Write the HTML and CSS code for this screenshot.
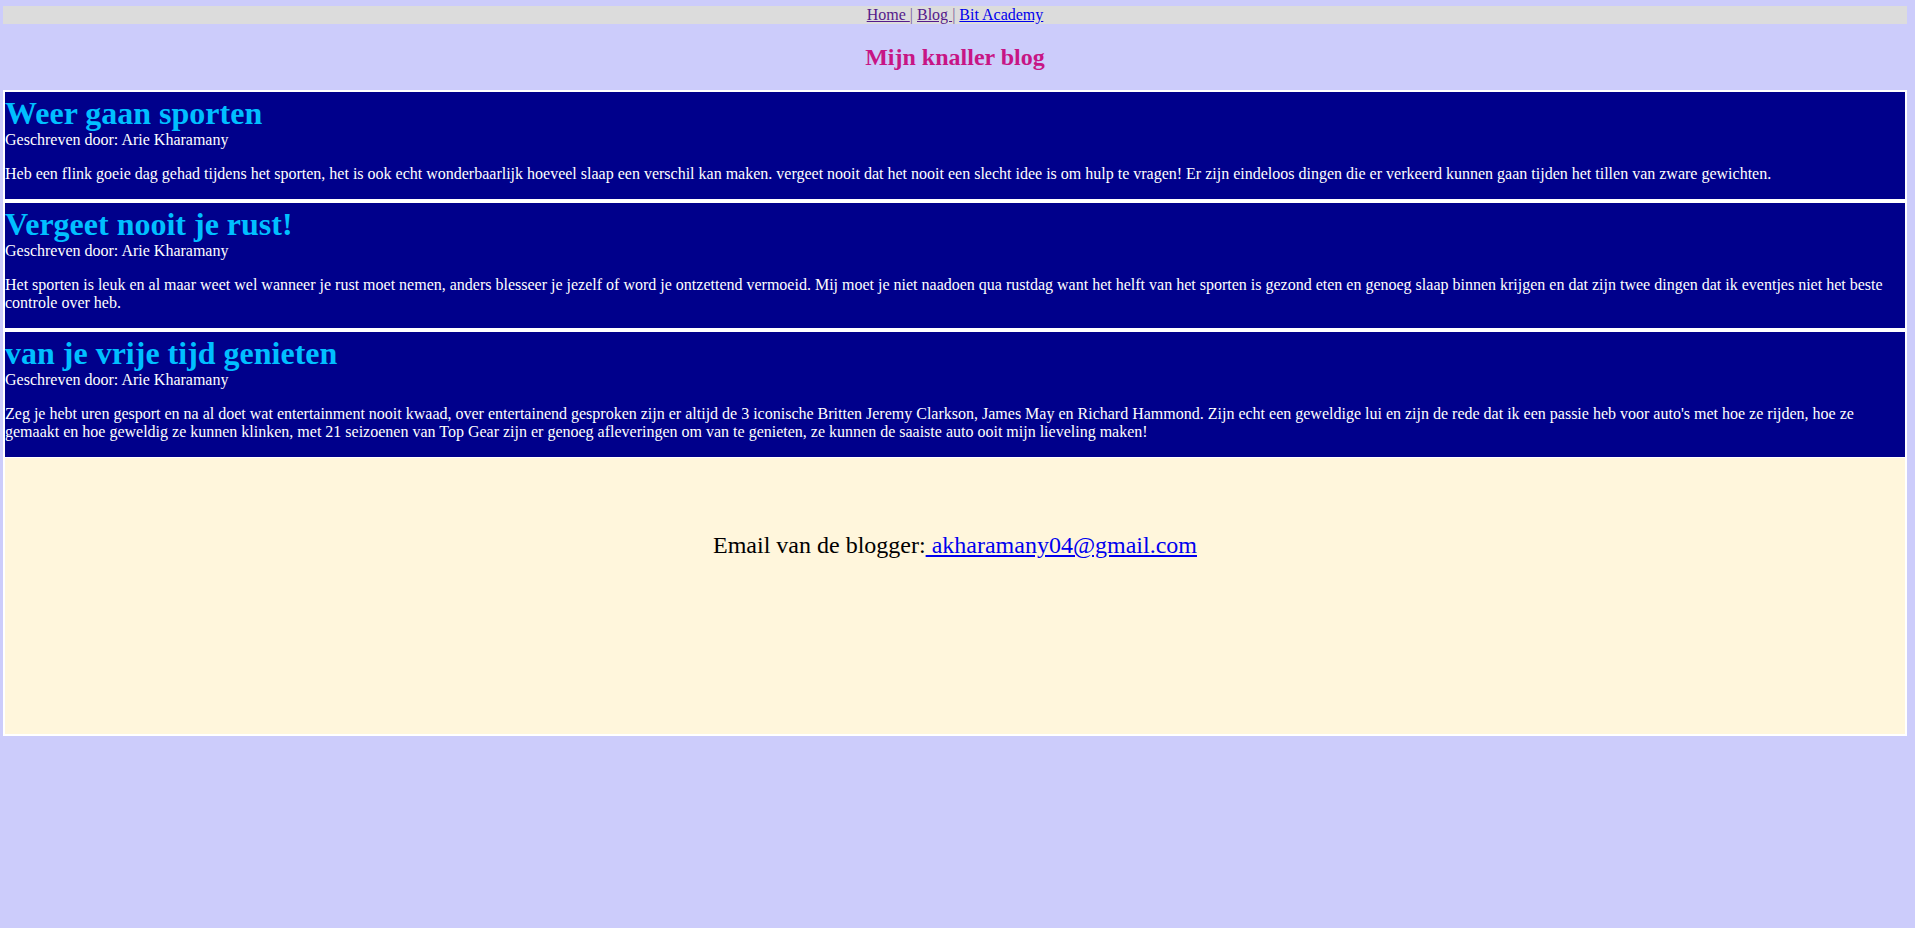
FILE: index.html
```html
<!DOCTYPE html>
<html lang="nl">
<head>
<meta charset="utf-8">
<title>Mijn knaller blog</title>
<link rel="stylesheet" href="styles.css">
</head>
<body>
<nav class="topnav">
  <a class="visited" href="#">Home </a><span class="sep">|</span> <a class="visited" href="#">Blog </a><span class="sep">|</span> <a class="fresh" href="#">Bit Academy</a>
</nav>
<h2 class="site-title">Mijn knaller blog</h2>
<main class="container">
  <article class="post">
    <h1 class="post-title">Weer gaan sporten</h1>
    <div class="author">Geschreven door: Arie Kharamany</div>
    <p class="post-body">Heb een flink goeie dag gehad tijdens het sporten, het is ook echt wonderbaarlijk hoeveel slaap een verschil kan maken. vergeet nooit dat het nooit een slecht idee is om hulp te vragen! Er zijn eindeloos dingen die er verkeerd kunnen gaan tijden het tillen van zware gewichten.</p>
  </article>
  <article class="post">
    <h1 class="post-title">Vergeet nooit je rust!</h1>
    <div class="author">Geschreven door: Arie Kharamany</div>
    <p class="post-body">Het sporten is leuk en al maar weet wel wanneer je rust moet nemen, anders blesseer je jezelf of word je ontzettend vermoeid. Mij moet je niet naadoen qua rustdag want het helft van het sporten is gezond eten en genoeg slaap binnen krijgen en dat zijn twee dingen dat ik eventjes niet het beste controle over heb.</p>
  </article>
  <article class="post last">
    <h1 class="post-title">van je vrije tijd genieten</h1>
    <div class="author">Geschreven door: Arie Kharamany</div>
    <p class="post-body">Zeg je hebt uren gesport en na al doet wat entertainment nooit kwaad, over entertainend gesproken zijn er altijd de 3 iconische Britten Jeremy Clarkson, James May en Richard Hammond. Zijn echt een geweldige lui en zijn de rede dat ik een passie heb voor auto's met hoe ze rijden, hoe ze gemaakt en hoe geweldig ze kunnen klinken, met 21 seizoenen van Top Gear zijn er genoeg afleveringen om van te genieten, ze kunnen de saaiste auto ooit mijn lieveling maken!</p>
  </article>
  <footer class="contact">
    <p class="email">Email van de blogger:<a href="#"> akharamany04@gmail.com</a></p>
  </footer>
</main>
</body>
</html>
```

FILE: styles.css
```css
html {
  background: #ccccfb;
}

body {
  margin: 6px 8px 8px 3px;
  font-family: "Liberation Serif", "Times New Roman", serif;
  font-size: 16px;
  background: #ccccfb;
}

.topnav {
  background: #dcdcdc;
  text-align: center;
  height: 18px;
  line-height: 18px;
}

.topnav a {
  text-decoration: underline;
}

.topnav .visited {
  color: #551a8b;
}

.topnav .fresh {
  color: #0000ee;
}

.topnav .sep {
  color: #7a5f98;
}

.site-title {
  color: #c71585;
  text-align: center;
  font-size: 24px;
  font-weight: bold;
  margin: 20px 0 19px;
}

.container {
  border: 2px solid #ffffff;
  background: #ffffff;
}

.post {
  display: flow-root;
  background: #00008b;
  color: #ffffff;
  padding-top: 3px;
  margin-bottom: 4px;
}

.post.last {
  margin-bottom: 1px;
}

.post-title {
  color: #00bfff;
  font-size: 32px;
  font-weight: bold;
  line-height: 36px;
  margin: 0;
}

.author {
  line-height: 18px;
}

.post-body {
  margin: 16px 0;
  line-height: 18px;
}

.contact {
  background: #fff6dc;
  height: 276px;
  padding-top: 74px;
  box-sizing: border-box;
}

.email {
  margin: 0;
  text-align: center;
  font-size: 24px;
  color: #000000;
}

.email a {
  color: #0000ee;
  text-decoration: underline;
}
```
